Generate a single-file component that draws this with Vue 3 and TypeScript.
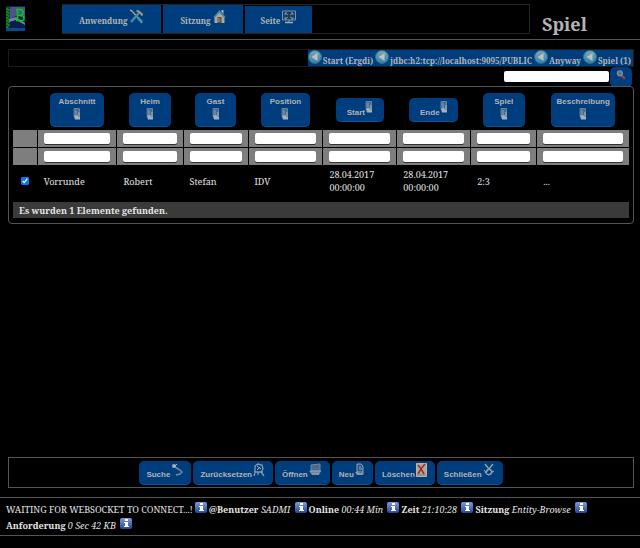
<script setup lang="ts">
import { ref } from 'vue'

interface Column {
  label: string
  width: number
  value: string
  stacked: boolean
}

const columns: Column[] = [
  { label: 'Abschnitt', width: 80, value: 'Vorrunde', stacked: true },
  { label: 'Heim', width: 66, value: 'Robert', stacked: true },
  { label: 'Gast', width: 65, value: 'Stefan', stacked: true },
  { label: 'Position', width: 75, value: 'IDV', stacked: true },
  { label: 'Start', width: 74, value: '28.04.2017 00:00:00', stacked: false },
  { label: 'Ende', width: 74, value: '28.04.2017 00:00:00', stacked: false },
  { label: 'Spiel', width: 66, value: '2:3', stacked: true },
  { label: 'Beschreibung', width: 93, value: '...', stacked: true },
]
const selectWidth = 24
const total = columns.reduce((sum, c) => sum + c.width, selectWidth)
const share = (width: number): string => `${(width / total) * 100}%`

const crumbs = ['Start (Ergdi)', 'jdbc:h2:tcp://localhost:9095/PUBLIC', 'Anyway', 'Spiel (1)']
const actions = [
  { label: 'Suche', icon: 'search' },
  { label: 'Zurücksetzen', icon: 'reset' },
  { label: 'Öffnen', icon: 'open' },
  { label: 'Neu', icon: 'new' },
  { label: 'Löschen', icon: 'delete' },
  { label: 'Schließen', icon: 'close' },
]
const status = [
  { label: '@Benutzer', value: 'SADMI' },
  { label: 'Online', value: '00:44 Min' },
  { label: 'Zeit', value: '21:10:28' },
  { label: 'Sitzung', value: 'Entity-Browse' },
  { label: 'Anforderung', value: '0 Sec 42 KB' },
]

const query = ref('')
const selected = ref(true)
</script>

<template>
  <div class="page">
    <svg class="defs" aria-hidden="true">
      <defs>
        <linearGradient id="info-fill" x1="0" y1="0" x2="0" y2="1">
          <stop offset="0" stop-color="#7d9bd6" />
          <stop offset="1" stop-color="#24489a" />
        </linearGradient>
        <linearGradient id="back-fill" x1="0" y1="0" x2="0" y2="1">
          <stop offset="0" stop-color="#78a9bd" />
          <stop offset="1" stop-color="#347fa5" />
        </linearGradient>
      </defs>
    </svg>

    <header class="top">
      <a class="logo" href="#" aria-label="Startseite">
        <svg width="19" height="25" viewBox="0 0 19 25">
          <rect width="19" height="25" fill="#17204f" />
          <path d="M4 1h15v11l-7-3-8 4z" fill="#4b5688" />
          <path d="M4 16l8-4 7 5v5H4z" fill="#111b45" />
          <path d="M3 13l7-2 9 6v2l-9-5-7 2z" fill="#77809c" />
          <path d="M0 1h3v21H0z" fill="#09571f" />
          <path d="M1 2v20M3 3v18" stroke="#19a333" stroke-dasharray="2 1" />
          <path d="M10 3.500h4q3 0 3 3t-3 3h-3M14 9.500q4 0 4 3t-4 2h-4M11.500 3v11.500" fill="none" stroke="#08c51a" stroke-width="1.600" />
          <path d="M0 23.500h19" stroke="#034b92" stroke-width="3" />
        </svg>
      </a>
      <nav class="menu">
        <a class="menu-item app" href="#">Anwendung
          <svg width="15" height="15" viewBox="0 0 15 15" fill="none">
            <path d="M1 1l2 1 7 8 3 4" stroke="#a39c92" stroke-width="1.500" />
            <path d="M10 4L2 13" stroke="#438aa5" stroke-width="2.500" />
            <path d="M7 2l2-1 5 4-1 2-3-3" fill="#afa6a0" stroke="#766f70" />
            <path d="M9 9l4 4" stroke="#4a91a8" stroke-width="2.500" />
          </svg>
        </a>
        <a class="menu-item session" href="#">Sitzung
          <svg width="13" height="15" viewBox="0 0 12 15">
            <path d="M1 7l5-4 5 4v7H1z" fill="#aaa8a2" />
            <path d="M0 8l6-7 6 7-1 1-5-5-5 5z" fill="#4c879f" />
            <path d="M8 1h2v4L8 3z" fill="#b0b0aa" />
            <path d="M4 8h4v6H4z" fill="#5e5144" /><path d="M5 9h1v4H5z" fill="#ad9b80" />
          </svg>
        </a>
        <a class="menu-item view" href="#">Seite
          <svg width="14" height="14" viewBox="0 0 14 14" fill="none" stroke="#7e93ab">
            <path d="M.5 1h13v9H.5z" fill="#183c61" />
            <path d="M3 5V3h2M9 3h2v2M11 7v2H9M5 9H3V7M3 3l3 2M11 3L8 5M3 9l3-2M11 9L8 7M7 10v2" />
            <path d="M3 12.500h8" stroke="#a6a9ad" stroke-width="1.500" />
          </svg>
        </a>
      </nav>
      <h1>Spiel</h1>
    </header>

    <main>
      <nav class="crumbs" aria-label="Pfad">
        <div class="trail">
          <a v-for="crumb in crumbs" :key="crumb" href="#">
            <svg width="14" height="14" viewBox="0 0 14 14">
              <circle cx="7" cy="7" r="6.500" fill="url(#back-fill)" stroke="#286e93" />
              <path d="M9.500 3v8L3.500 7z" fill="#c1c0bd" />
            </svg>{{ crumb }}</a>
        </div>
      </nav>

      <form class="search" @submit.prevent>
        <input v-model="query" type="text" aria-label="Suchbegriff" />
        <button class="btn find" type="submit" aria-label="Suchen">
          <svg width="10" height="10" viewBox="0 0 9 9" fill="none">
            <path d="M5 5l3 3" stroke="#a3403c" stroke-width="2" />
            <circle cx="3.500" cy="3" r="2.300" fill="#527899" stroke="#7d8da1" />
          </svg>
        </button>
      </form>

      <section class="panel">
        <table>
          <colgroup>
            <col :style="{ width: share(selectWidth) }" />
            <col v-for="c in columns" :key="c.label" :style="{ width: share(c.width) }" />
          </colgroup>
          <thead>
            <tr>
              <th></th>
              <th v-for="c in columns" :key="c.label" scope="col">
                <button class="btn sort" :class="{ stacked: c.stacked }" type="button">
                  <span>{{ c.label }}</span>
                  <svg width="8" height="12" viewBox="0 0 8 12">
                    <path d="M1 .5h5.500v8H1z" fill="#456b91" stroke="#8297ae" stroke-width=".7" />
                    <path d="M3 2v5" stroke="#8ca0b4" />
                    <path d="M1 8l2-1 4 1v3.500H2z" fill="#a7b0b8" />
                    <path d="M5 4h2v5H5z" fill="#8293a5" />
                  </svg>
                </button>
              </th>
            </tr>
          </thead>
          <tbody>
            <tr v-for="bound in ['von', 'bis']" :key="bound" class="filter">
              <td></td>
              <td v-for="c in columns" :key="c.label">
                <input type="text" :aria-label="`${c.label} ${bound}`" />
              </td>
            </tr>
            <tr class="data">
              <td class="pick"><input v-model="selected" type="checkbox" aria-label="Zeile auswählen" /></td>
              <td v-for="c in columns" :key="c.label">{{ c.value }}</td>
            </tr>
          </tbody>
          <tfoot>
            <tr>
              <td colspan="9">Es wurden 1 Elemente gefunden.</td>
            </tr>
          </tfoot>
        </table>
      </section>

      <div class="actions">
        <button v-for="a in actions" :key="a.label" class="btn action" type="button">
          <span>{{ a.label }}</span>
          <svg v-if="a.icon === 'search'" width="12" height="14" viewBox="0 0 12 14" fill="none">
            <path d="M4 4l5 3 2 2-2 2-4 1" stroke="#71899d" stroke-width="1.500" />
            <circle cx="3" cy="3" r="2" fill="#9eafbb" /><path d="M4 3l2-2" stroke="#b4bbc0" />
          </svg>
          <svg v-else-if="a.icon === 'reset'" width="12" height="14" viewBox="0 0 12 14" fill="none" stroke="#8499ae">
            <path d="M2 9V3l3-2 4 1 1 4-2 3M1 9h9M2 10l-1 3M5 9v3M8 9l3 4" stroke-width="1.300" />
            <path d="M4 7l3-3M4 3l4 3" stroke="#a6afb7" />
          </svg>
          <svg v-else-if="a.icon === 'open'" width="13" height="14" viewBox="0 0 13 14">
            <path d="M2 2l9-1v7H2z" fill="#456b92" stroke="#7188a0" />
            <path d="M0 8h12l-2 4H3z" fill="#70849a" /><path d="M1 8h11M3 11h7" stroke="#9ba6b0" />
          </svg>
          <svg v-else-if="a.icon === 'new'" width="10" height="14" viewBox="0 0 10 14">
            <path d="M2 1h4l2 2v6H2z" fill="#285782" stroke="#8da1b4" />
            <path d="M4 4h2M4 6h3" stroke="#91a6ba" />
            <path d="M0 9h3l2 1 4-1-1 3H2z" fill="#8596a8" />
          </svg>
          <svg v-else-if="a.icon === 'delete'" width="11" height="14" viewBox="0 0 11 14" fill="none">
            <path d="M.5.5h10v13H.5z" fill="#aaa9a3" stroke="#b6b3aa" />
            <path d="M2 2q3 3 6 9M9 1Q5 5 2 11" stroke="#a52d28" stroke-width="1.700" />
            <path d="M1 12h9" stroke="#837c70" />
          </svg>
          <svg v-else width="12" height="14" viewBox="0 0 12 14" fill="none">
            <path d="M2 1l4 5 4 3M10 1L6 6l-4 4" stroke="#91a5b7" stroke-width="1.300" />
            <circle cx="6" cy="9" r="3" stroke="#8499ab" /><path d="M1 7l4 5 6-4" stroke="#99a7b2" />
          </svg>
        </button>
      </div>
    </main>

    <footer>
      <span>WAITING FOR WEBSOCKET TO CONNECT...!</span><svg class="info" width="12" height="11" viewBox="0 0 12 11">
        <rect width="12" height="11" rx="2" fill="url(#info-fill)" />
        <path d="M5 1h3v2H5zM4 4h4v4h1v1H4V8h1V5H4z" fill="#fff" />
      </svg>
      <template v-for="(s, i) in status" :key="s.label">
        <br v-if="i === 4" />
        <b>{{ s.label }}</b>&#32;<i>{{ s.value }}</i>&#32;<svg class="info" width="12" height="11" viewBox="0 0 12 11">
          <rect width="12" height="11" rx="2" fill="url(#info-fill)" />
          <path d="M5 1h3v2H5zM4 4h4v4h1v1H4V8h1V5H4z" fill="#fff" />
        </svg>
      </template>
    </footer>
  </div>
</template>

<style>
body {
  background: #000;
}
</style>

<style scoped>
* {
  box-sizing: border-box;
}
.page {
  min-height: 100vh;
  padding-bottom: 12px;
  display: flex;
  flex-direction: column;
  background: #000;
  color: #e4e4e4;
  font: 9px/13px "Noto Serif", "Droid Serif", serif;
}
.defs {
  position: absolute;
  width: 0;
  height: 0;
}
a {
  color: #b3b3b3;
  text-decoration: none;
}
.top {
  display: grid;
  grid-template-columns: 56px minmax(0, 468fr) 110fr;
  height: 40px;
  padding: 4px 0 4px 6px;
  border-bottom: 1px solid #555;
}
.logo {
  padding-top: 2px;
}
.logo svg {
  display: block;
}
.menu {
  display: flex;
  align-items: flex-end;
  gap: 2px;
  height: 30px;
  border: 1px solid #242424;
  border-left: 0;
}
.menu-item {
  display: flex;
  align-items: flex-end;
  gap: 2px;
  height: 28px;
  padding: 0 17px 6px;
  background: #003d7d;
  font-size: 8px;
  line-height: 13px;
  font-weight: bold;
  white-space: nowrap;
}
.menu-item svg {
  align-self: flex-start;
  margin-top: 4px;
}
.menu-item.view {
  height: 27px;
  padding: 0 16px 6px;
}
h1 {
  margin: 0;
  padding: 8px 0 0 12px;
  color: #b3b3b3;
  font-size: 18px;
  line-height: 24px;
}
main {
  flex: 1;
  display: flex;
  flex-direction: column;
  padding: 9px 6px 9px 8px;
}
.crumbs {
  display: flex;
  justify-content: flex-end;
  height: 18px;
  border: 1px solid #1c1c1c;
}
.trail {
  display: flex;
  background: #003d7d;
}
.trail a {
  display: flex;
  align-items: flex-end;
  gap: 1px;
  padding-right: 2px;
  font-size: 8px;
  line-height: 11px;
  font-weight: bold;
  white-space: nowrap;
}
.trail svg {
  align-self: flex-start;
}
.search {
  display: flex;
  justify-content: flex-end;
  align-items: center;
  height: 19px;
  gap: 1px;
  padding-right: 2px;
}
input[type='text'] {
  display: block;
  min-width: 0;
  height: 11px;
  padding: 0 2px;
  border: 0;
  border-radius: 2px;
  background: #fff;
  font: inherit;
}
.search input {
  width: 105px;
}
.btn {
  display: flex;
  align-items: center;
  justify-content: center;
  border: 0;
  border-bottom: 1px solid #0055a5;
  border-radius: 5px;
  background: #003d7d;
  color: #b3b3b3;
  font: bold 8px/12px "Liberation Sans", Arial, sans-serif;
  white-space: nowrap;
}
.find {
  width: 22px;
  height: 20px;
  padding: 0 0 3px;
}
.panel {
  padding: 5px 3px 4px;
  border: 1px solid #555;
  border-radius: 4px;
}
table {
  width: 100%;
  table-layout: fixed;
  border-collapse: separate;
  border-spacing: 1px;
}
th,
td {
  padding: 0 6px;
  text-align: left;
}
th {
  height: 36px;
  padding-bottom: 2px;
}
.sort {
  width: 80%;
  height: 24px;
  margin: 0 auto;
  padding: 0 6px;
}
.sort svg {
  margin-bottom: 6px;
}
.sort.stacked {
  flex-direction: column;
  height: 34px;
  padding: 2px 6px 0;
}
.sort:not(.stacked) span {
  padding-top: 6px;
}
.filter td {
  height: 17px;
  background: #7e7e7e;
}
.filter input {
  width: 100%;
  box-shadow: 0 1px 0 #333;
}
.data td {
  height: 35px;
  padding-bottom: 5px;
}
.pick input {
  display: block;
  width: 8px;
  height: 8px;
  margin: 0 auto;
}
.data .pick {
  padding: 0 0 5px;
}
tfoot td {
  height: 16px;
  background: #3a3a3a;
  font-weight: bold;
}
.actions {
  display: flex;
  justify-content: center;
  align-items: center;
  gap: 2px;
  height: 31px;
  margin-top: auto;
  border: 1px solid #555;
}
.action {
  gap: 1px;
  height: 24px;
  padding: 0 8px 0 7px;
}
.action span {
  padding-top: 6px;
}
.action svg {
  margin-bottom: 4px;
}
footer {
  padding: 4px 6px 1px;
  border-top: 1px solid #555;
  border-bottom: 1px solid #555;
  line-height: 16px;
}
.info {
  margin: 0 2px;
  vertical-align: 0;
}
</style>
